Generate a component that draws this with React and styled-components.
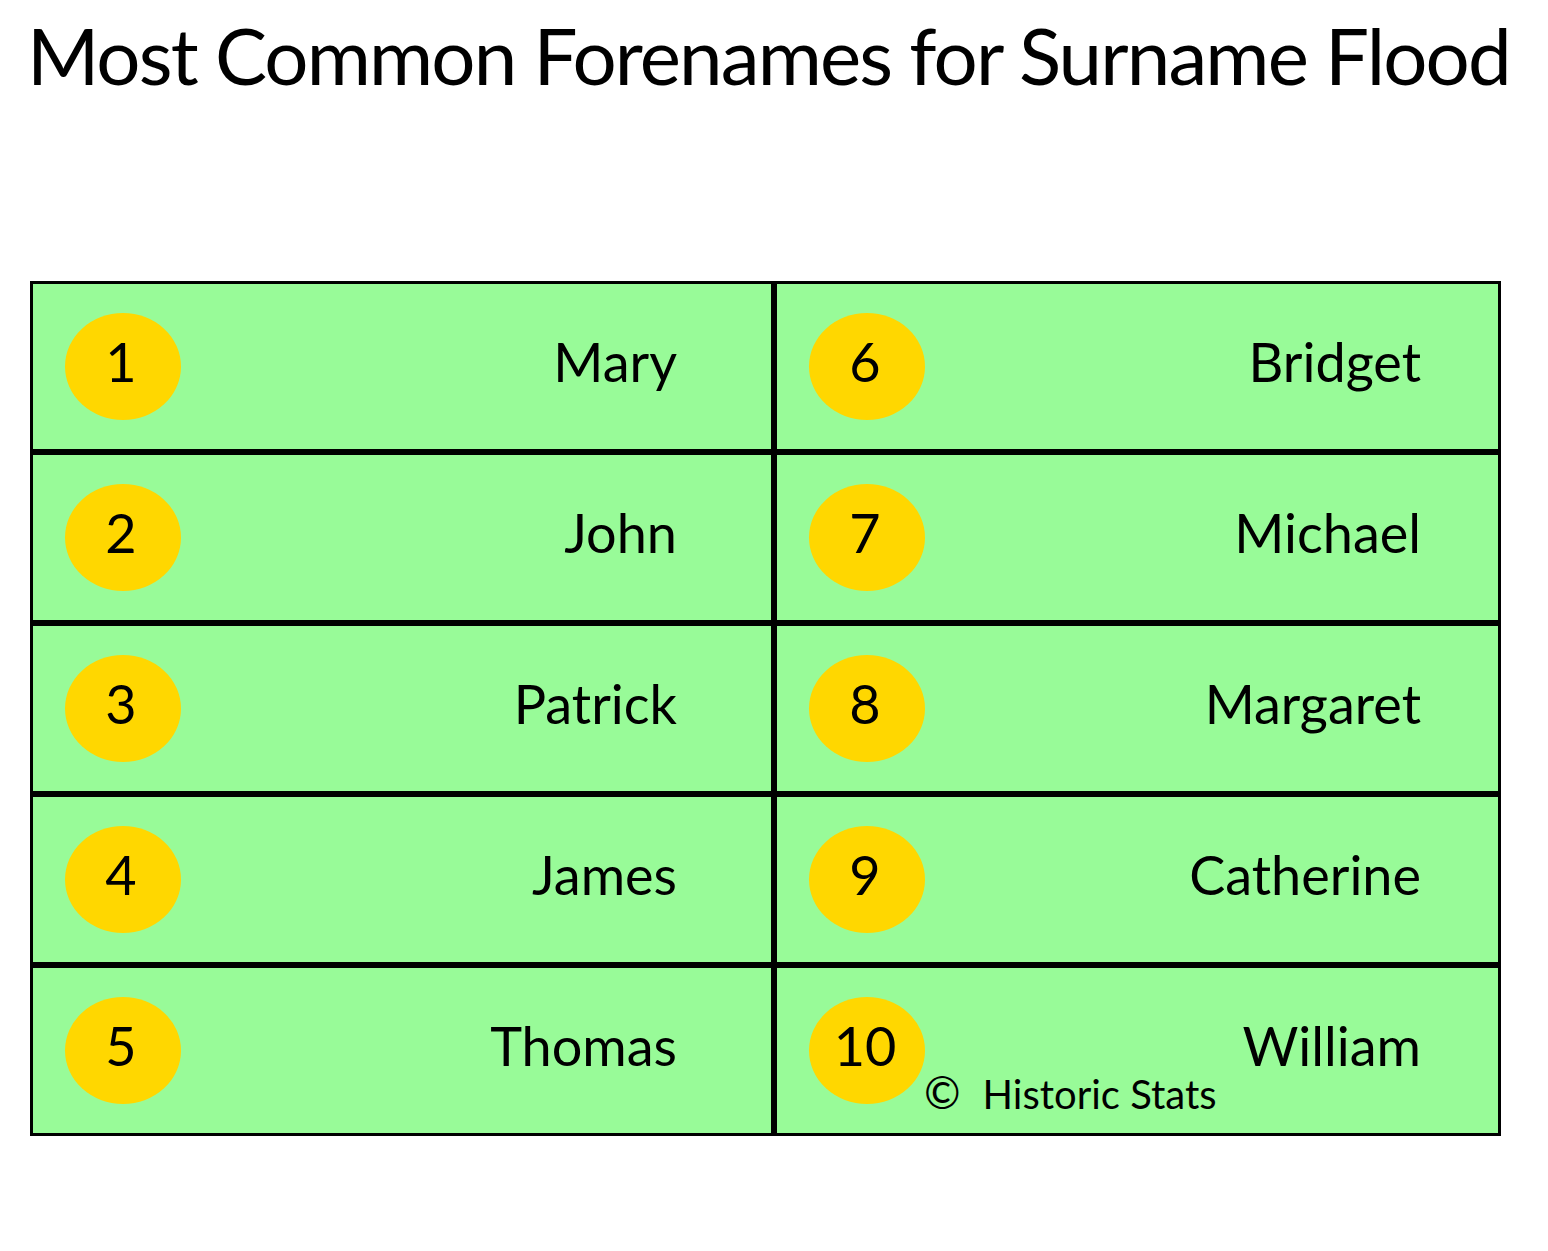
import React from "react";
import styled, { createGlobalStyle } from "styled-components";

const Global = createGlobalStyle`
  html, body { margin: 0; padding: 0; background: #ffffff; }
  body { font-family: Lato, "Open Sans", sans-serif; color: #000; }
`;

const Page = styled.div`
  width: 1548px;
  height: 1251px;
  box-sizing: border-box;
  padding-top: 9px;
  display: flex;
  flex-direction: column;
`;

const Title = styled.h1`
  margin: 0;
  padding-left: 27px;
  font-family: Lato, sans-serif;
  font-weight: 400;
  font-size: 78px;
  letter-spacing: -1.85px;
  line-height: 1.2;
  text-align: left;
  white-space: nowrap;
`;

const Board = styled.div`
  margin: 178px 0 0 30px;
  display: grid;
  grid-template-columns: 744px 727px;
  grid-auto-flow: column;
  grid-template-rows: repeat(5, 171px);
`;

const Cell = styled.div`
  position: relative;
  box-sizing: border-box;
  border: 3px solid #000;
  background: #98fb98;
  display: flex;
  align-items: center;
  padding-left: 32px;
`;

const Badge = styled.div`
  width: 116px;
  height: 107px;
  border-radius: 50%;
  background: #ffd700;
  flex: none;
  display: flex;
  align-items: center;
  justify-content: center;
  font-size: 54px;
  padding-bottom: 9px;
  box-sizing: border-box;
  padding-right: 4px;
`;

const Name = styled.div`
  width: 496px;
  text-align: right;
  font-size: 54px;
  padding-bottom: 9px;
  white-space: nowrap;
`;

const Credit = styled.div`
  position: absolute;
  left: 147px;
  bottom: 15px;
  font-size: 40px;
  display: flex;
  align-items: baseline;
  white-space: nowrap;
`;

const CopyMark = styled.span`
  font-size: 44px;
  margin-right: 22px;
`;

const names = [
  "Mary",
  "John",
  "Patrick",
  "James",
  "Thomas",
  "Bridget",
  "Michael",
  "Margaret",
  "Catherine",
  "William",
];

export default function App() {
  return (
    <>
      <Global />
      <Page>
        <Title>Most Common Forenames for Surname Flood</Title>
        <Board>
          {names.map((n, i) => (
            <Cell key={n}>
              <Badge>{i + 1}</Badge>
              <Name>{n}</Name>
              {i === 9 && (
                <Credit>
                  <CopyMark>©</CopyMark>
                  Historic Stats
                </Credit>
              )}
            </Cell>
          ))}
        </Board>
      </Page>
    </>
  );
}
